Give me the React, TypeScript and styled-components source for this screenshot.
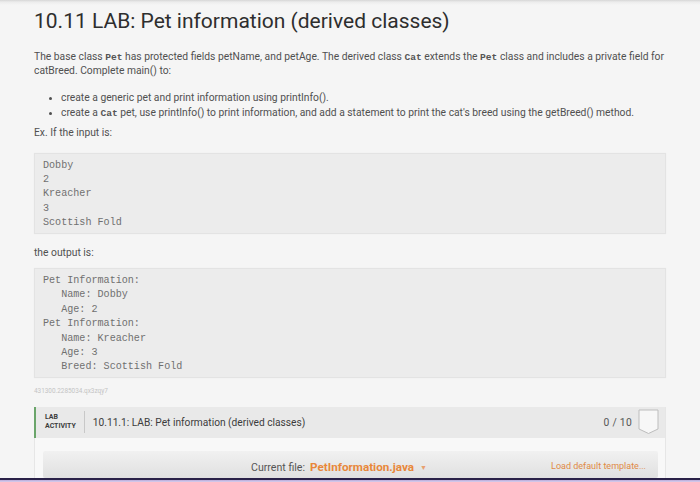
import React from "react";
import styled, { createGlobalStyle } from "styled-components";

const Global = createGlobalStyle`
  html, body { margin: 0; padding: 0; }
  body { background: #f5f5f5; font-family: Roboto, "Liberation Sans", sans-serif; }
`;

const Screen = styled.div`
  width: 700px;
  height: 482px;
  display: flex;
  flex-direction: column;
  overflow: hidden;
  background: linear-gradient(#d6d6d6 0px, #ececec 2px, #f5f5f5 5px);
`;

const Content = styled.div`
  flex: 1;
  min-height: 0;
  overflow: hidden;
  padding: 8px 34px 0 34px;
  display: flex;
  flex-direction: column;
`;

const Title = styled.h1`
  margin: 0;
  font-size: 21px;
  line-height: 26px;
  font-weight: 400;
  color: #2e2e2e;
`;

const Para = styled.p<{ $top: number }>`
  margin: ${(p) => p.$top}px 0 0 0;
  font-size: 10.3px;
  line-height: 13.5px;
  color: #505050;
  font-weight: 400;
`;

const Code = styled.code`
  font-family: "Liberation Mono", "DejaVu Sans Mono", monospace;
  font-weight: 700;
  font-size: 9.6px;
  line-height: 1;
  color: #555;
`;

const List = styled.ul`
  margin: 13px 0 0 0;
  padding: 0 0 0 27px;
  font-size: 10.3px;
  line-height: 15px;
  color: #505050;
  li::marker { font-size: 9px; }
`;

const Pre = styled.pre<{ $top: number }>`
  margin: ${(p) => p.$top}px 0 0 0;
  padding: 5px 8px 2px 8px;
  background: #ececec;
  border: 1px solid #e3e3e3;
  box-shadow: 0 0 1px rgba(0,0,0,0.06);
  font-family: "Liberation Mono", "DejaVu Sans Mono", monospace;
  font-size: 10.1px;
  line-height: 14.4px;
  color: #707070;
`;

const Ident = styled.div`
  margin-top: 9px;
  font-size: 6.4px;
  line-height: 8px;
  color: #c4c4c4;
`;

const Lab = styled.section`
  margin-top: 12px;
  border-left: 1px solid #e6e6e6;
  border-right: 1px solid #e6e6e6;
  background: #f8f8f8;
  flex: 1;
  display: flex;
  flex-direction: column;
`;

const LabHeader = styled.div`
  height: 31px;
  flex: none;
  background: #e9e9e9;
  border-left: 2px solid #6aa56a;
  margin-left: -1px;
  display: flex;
  align-items: center;
  padding: 0 6px 0 9px;
`;

const Kind = styled.div`
  font-size: 7px;
  line-height: 9px;
  font-weight: 700;
  color: #3c3c3c;
  text-transform: uppercase;
  padding-right: 8px;
  border-right: 1px solid #c8c8c8;
  height: 22px;
  display: flex;
  flex-direction: column;
  justify-content: center;
`;

const LabTitle = styled.div`
  flex: 1;
  padding-left: 8px;
  font-size: 10.2px;
  color: #3c3c3c;
`;

const Score = styled.div`
  font-size: 10.3px;
  color: #555;
  margin-right: 6px;
  letter-spacing: 0.3px;
`;

const Badge = styled.svg`
  display: block;
`;

const LabBody = styled.div`
  padding: 13px 7px 0 8px;
  flex: 1;
  display: flex;
`;

const Toolbar = styled.div`
  flex: 1;
  background: linear-gradient(#f1f1f1, #e0e0e0);
  border-radius: 2px;
  display: flex;
  align-items: flex-start;
  padding: 9px 12px 0 12px;
`;

const FileLabel = styled.div`
  flex: 1;
  text-align: center;
  font-size: 10.6px;
  color: #555;
  padding-left: 72px;
`;

const FileName = styled.span`
  font-weight: 700;
  font-size: 11.7px;
  color: #e8873a;
  margin-left: 5px;
`;

const Caret = styled.span`
  color: #e8a070;
  font-size: 7px;
  margin-left: 6px;
  vertical-align: 1px;
`;

const LoadLink = styled.div`
  font-size: 9px;
  color: #e08a45;
  padding-top: 1px;
`;

const Bezel = styled.div`
  height: 4px;
  flex: none;
  background: linear-gradient(#2a2148 0, #2a2148 2px, #b7a9d8 2px, #d8d0ee 4px);
`;

export default function App() {
  return (
    <>
      <Global />
      <Screen>
        <Content>
          <Title>10.11 LAB: Pet information (derived classes)</Title>
          <Para $top={16}>
            The base class <Code>Pet</Code> has protected fields petName, and petAge. The derived class{" "}
            <Code>Cat</Code> extends the <Code>Pet</Code> class and includes a private field for
            <br />
            catBreed. Complete main() to:
          </Para>
          <List>
            <li>create a generic pet and print information using printInfo().</li>
            <li>
              create a <Code>Cat</Code> pet, use printInfo() to print information, and add a statement to print
              the cat's breed using the getBreed() method.
            </li>
          </List>
          <Para $top={6}>Ex. If the input is:</Para>
          <Pre $top={13}>{`Dobby
2
Kreacher
3
Scottish Fold`}</Pre>
          <Para $top={12}>the output is:</Para>
          <Pre $top={9}>{`Pet Information:
   Name: Dobby
   Age: 2
Pet Information:
   Name: Kreacher
   Age: 3
   Breed: Scottish Fold`}</Pre>
          <Ident>431300.2285034.qx3zqy7</Ident>
          <Lab>
            <LabHeader>
              <Kind>
                <span>Lab</span>
                <span>Activity</span>
              </Kind>
              <LabTitle>10.11.1: LAB: Pet information (derived classes)</LabTitle>
              <Score>0 / 10</Score>
              <Badge width="21" height="26" viewBox="0 0 21 26">
                <path d="M1 1 H20 V20 L10.5 24.5 L1 20 Z" fill="#f7f7f7" stroke="#bdbdbd" strokeWidth="1" />
              </Badge>
            </LabHeader>
            <LabBody>
              <Toolbar>
                <FileLabel>
                  Current file:<FileName>PetInformation.java</FileName>
                  <Caret>▼</Caret>
                </FileLabel>
                <LoadLink>Load default template...</LoadLink>
              </Toolbar>
            </LabBody>
          </Lab>
        </Content>
        <Bezel />
      </Screen>
    </>
  );
}
